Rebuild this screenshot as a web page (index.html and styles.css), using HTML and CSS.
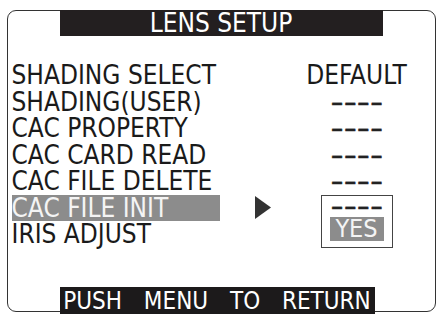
FILE: index.html
```html
<!DOCTYPE html>
<html>
<head>
<meta charset="utf-8">
<link rel="stylesheet" href="styles.css">
</head>
<body>
<div class="screen">
  <div class="title">LENS SETUP</div>
  <div class="menu">
    <div class="label">SHADING SELECT</div><div class="value">DEFAULT</div>
    <div class="label">SHADING(USER)</div><div class="value"><span class="dash">----</span></div>
    <div class="label">CAC PROPERTY</div><div class="value"><span class="dash">----</span></div>
    <div class="label">CAC CARD READ</div><div class="value"><span class="dash">----</span></div>
    <div class="label">CAC FILE DELETE</div><div class="value"><span class="dash">----</span></div>
    <div class="label selected">CAC FILE INIT</div>
    <div class="arrow"><svg width="16" height="23" viewBox="0 0 16 23"><path d="M0 0 L16 11.5 L0 23 Z" fill="#333"/></svg></div>
    <div class="popup">
      <div class="opt"><span class="dash">----</span></div>
      <div class="opt yes">YES</div>
    </div>
    <div class="label">IRIS ADJUST</div>
  </div>
  <div class="footer">PUSH MENU TO RETURN</div>
</div>
</body>
</html>
```
FILE: styles.css
```css
html, body {
  margin: 0;
  padding: 0;
  background: #fff;
}
body {
  width: 440px;
  height: 314px;
  overflow: hidden;
  font-family: "DejaVu Sans Condensed", "DejaVu Sans", sans-serif;
  font-stretch: condensed;
  color: #1a1a1a;
}
.screen {
  box-sizing: border-box;
  margin: 10px 0 0 7px;
  width: 429px;
  height: 302px;
  border: 1.5px solid #333;
  border-radius: 9px;
  display: flex;
  flex-direction: column;
}
.title {
  margin: -1.5px 0 0 51.5px;
  width: 323px;
  height: 26px;
  background: #231f20;
  color: #fff;
  font-size: 26px;
  line-height: 26px;
  text-align: center;
}
.menu {
  margin: 26.5px 0 0 3.5px;
  display: grid;
  grid-template-columns: 208px 82px 110px;
  grid-auto-rows: 26.5px;
  font-size: 26px;
  line-height: 26.5px;
}
.label {
  grid-column: 1;
  white-space: nowrap;
}
.label.selected {
  background: #8c8c8c;
  color: #f4f4f4;
}
.value {
  grid-column: 3;
  text-align: center;
}
.dash {
  display: inline-block;
  font-family: "DejaVu Sans", sans-serif;
  font-stretch: normal;
  font-size: 26px;
  line-height: 20px;
  color: #222;
  -webkit-text-stroke: 0.4px #222;
  transform: scaleX(1.4);
}
.arrow {
  grid-column: 2;
  grid-row: 6;
  display: flex;
  align-items: center;
  padding-left: 35px;
}
.arrow svg {
  display: block;
}
.popup {
  grid-column: 3;
  grid-row: 6 / span 2;
  justify-self: center;
  box-sizing: border-box;
  width: 72px;
  border: 1.5px solid #444;
  display: flex;
  flex-direction: column;
  align-items: center;
}
.opt {
  text-align: center;
}
.opt:first-child {
  height: 21px;
  line-height: 21px;
}
.opt.yes {
  width: 54px;
  height: 24px;
  line-height: 24px;
  font-size: 25px;
  background: #8c8c8c;
  color: #f4f4f4;
}
.footer {
  margin: auto 0 -3.5px 51.5px;
  width: 315px;
  height: 28px;
  background: #1c1a1b;
  color: #fff;
  font-size: 24px;
  line-height: 29px;
  text-align: center;
  word-spacing: 15px;
  white-space: nowrap;
}
```
